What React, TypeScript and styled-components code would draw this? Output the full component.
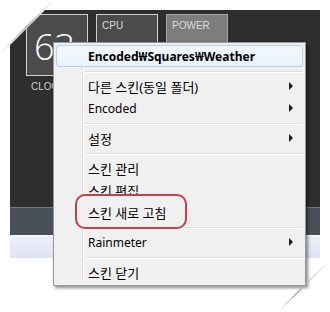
import styled, { createGlobalStyle } from 'styled-components';

const GlobalStyle = createGlobalStyle`
  html, body {
    margin: 0;
    padding: 0;
    background: #ffffff;
  }
  body {
    font-family: "Noto Sans", "Noto Sans CJK KR", sans-serif;
  }
`;

type MenuEntry =
  | { kind: 'item'; label: string; arrow?: boolean; active?: boolean; bold?: boolean; circled?: boolean }
  | { kind: 'sep' };

const entries: MenuEntry[] = [
  { kind: 'item', label: 'Encoded₩Squares₩Weather', active: true, bold: true },
  { kind: 'sep' },
  { kind: 'item', label: '다른 스킨(동일 폴더)', arrow: true },
  { kind: 'item', label: 'Encoded', arrow: true },
  { kind: 'sep' },
  { kind: 'item', label: '설정', arrow: true },
  { kind: 'sep' },
  { kind: 'item', label: '스킨 관리' },
  { kind: 'item', label: '스킨 편집' },
  { kind: 'item', label: '스킨 새로 고침', circled: true },
  { kind: 'sep' },
  { kind: 'item', label: 'Rainmeter', arrow: true },
  { kind: 'sep' },
  { kind: 'item', label: '스킨 닫기' },
];

const hasHangul = (s: string) => /[가-힣]/.test(s);

function PageCurls() {
  return (
    <Curls width="330" height="312" viewBox="0 0 330 312">
      <defs>
        <linearGradient id="curlA" x1="0" y1="1" x2="1" y2="0">
          <stop offset="0" stopColor="#c8c8c8" stopOpacity="0" />
          <stop offset="0.5" stopColor="#b8b8b8" />
          <stop offset="1" stopColor="#c8c8c8" stopOpacity="0" />
        </linearGradient>
        <linearGradient id="curlB" x1="0" y1="1" x2="1" y2="0">
          <stop offset="0" stopColor="#a8a8a8" stopOpacity="0" />
          <stop offset="0.35" stopColor="#a8a8a8" />
          <stop offset="1" stopColor="#d0d0d0" stopOpacity="0" />
        </linearGradient>
      </defs>
      <polygon points="10,10 45,10 10,45" fill="#ffffff" />
      <polygon points="0,52 52,0 55,0 0,55" fill="url(#curlA)" />
      <polygon points="279,310 330,259 330,261 281,310" fill="url(#curlB)" />
    </Curls>
  );
}

export default function App() {
  return (
    <Frame>
      <GlobalStyle />
      <Desktop>
        <DarkArea>
          <TileGroup>
            <Tile $tone="dark">
              <BigNumber>63</BigNumber>
            </Tile>
            <Caption>CLOCK</Caption>
          </TileGroup>
          <Tile $tone="dark">
            <TileLabel>CPU</TileLabel>
          </Tile>
          <Tile $tone="light">
            <TileLabel>POWER</TileLabel>
          </Tile>
        </DarkArea>
        <Taskbar />
        <Strip />
      </Desktop>

      <Menu>
        {entries.map((e, i) =>
          e.kind === 'sep' ? (
            <Separator key={i} />
          ) : (
            <Item key={i} $active={e.active} $circled={e.circled}>
              <Label $bold={e.bold} $hangul={hasHangul(e.label)}>
                {e.label}
              </Label>
              {e.arrow && <Arrow />}
            </Item>
          )
        )}
      </Menu>

      <PageCurls />
    </Frame>
  );
}

const Frame = styled.div`
  position: relative;
  width: 330px;
  height: 312px;
  padding: 10px;
  box-sizing: border-box;
  overflow: hidden;
  background: #ffffff;
`;

const Desktop = styled.div`
  display: flex;
  flex-direction: column;
  width: 310px;
`;

const DarkArea = styled.div`
  display: flex;
  align-items: flex-start;
  gap: 8px;
  height: 197px;
  box-sizing: border-box;
  padding: 4px 0 0 16px;
  background: #2e2e2e;
`;

const TileGroup = styled.div`
  display: flex;
  flex-direction: column;
`;

const Tile = styled.div<{ $tone: 'dark' | 'light' }>`
  position: relative;
  width: 62px;
  height: 62px;
  box-sizing: border-box;
  padding: 5px 4px;
  border: 1px solid ${(p) => (p.$tone === 'dark' ? '#cfcfcf' : '#a8a8a8')};
  background: ${(p) =>
    p.$tone === 'dark'
      ? 'repeating-conic-gradient(#525252 0 25%, #444444 0 50%) 0 0 / 2px 2px'
      : 'repeating-conic-gradient(#848484 0 25%, #767676 0 50%) 0 0 / 2px 2px'};
`;

const BigNumber = styled.div`
  padding: 9px 0 0 3px;
  font-family: "Open Sans", "Liberation Sans", sans-serif;
  font-weight: 300;
  font-size: 36px;
  line-height: 36px;
  color: #ffffff;
`;

const TileLabel = styled.div`
  font-family: "Liberation Sans", Arial, sans-serif;
  font-size: 10px;
  line-height: 12px;
  color: #dcdcdc;
  padding-left: 1px;
`;

const Caption = styled.div`
  margin-top: 5px;
  padding-left: 5px;
  font-family: "Liberation Sans", Arial, sans-serif;
  font-size: 10px;
  line-height: 12px;
  color: #d0d0d0;
`;

const Taskbar = styled.div`
  height: 28px;
  box-sizing: border-box;
  border-top: 1px solid #737980;
  background: #4a5058;
`;

const Strip = styled.div`
  height: 23px;
  box-sizing: border-box;
  border-top: 1px solid #ffffff;
  background: linear-gradient(#edeff9, #dfe2f2);
`;

const Menu = styled.div`
  position: absolute;
  left: 53px;
  top: 42px;
  width: 253px;
  box-sizing: border-box;
  padding: 2px;
  border: 1px solid #979797;
  background: #f0f0f0;
  box-shadow: 2px 2px 3px rgba(0, 0, 0, 0.45);
  font-family: "Noto Sans", "Noto Sans CJK KR", sans-serif;
  font-size: 12px;
  color: #000000;

  &::before {
    content: '';
    position: absolute;
    left: 28px;
    top: 2px;
    bottom: 2px;
    width: 1px;
    background: #e0e0e0;
    box-shadow: 1px 0 0 #ffffff;
  }
`;

const Item = styled.div<{ $active?: boolean; $circled?: boolean }>`
  position: relative;
  display: flex;
  align-items: center;
  height: 22px;
  box-sizing: border-box;
  padding: 0 9px 0 31px;
  border: 1px solid ${(p) => (p.$active ? '#b3d3ee' : 'transparent')};
  border-radius: 3px;
  background: ${(p) => (p.$active ? 'linear-gradient(#f3f7fb, #e9f1f9)' : 'transparent')};

  ${(p) =>
    p.$circled &&
    `
    &::before {
      content: '';
      position: absolute;
      left: 18px;
      top: -8px;
      width: 112px;
      height: 35px;
      box-sizing: border-box;
      border: 2px solid #c4404c;
      border-radius: 10px;
      background: #f0f0f0;
    }
  `}
`;

const Label = styled.span<{ $bold?: boolean; $hangul?: boolean }>`
  position: relative;
  font-size: ${(p) => (p.$hangul ? '13px' : '12px')};
  font-weight: ${(p) => (p.$bold ? 700 : 400)};
  white-space: nowrap;
`;

const Arrow = styled.span`
  margin-left: auto;
  width: 0;
  height: 0;
  border-left: 4px solid #1a1a1a;
  border-top: 4px solid transparent;
  border-bottom: 4px solid transparent;
`;

const Separator = styled.div`
  height: 8px;
  margin-left: 28px;
  display: flex;
  align-items: center;

  &::after {
    content: '';
    flex: 1;
    height: 1px;
    background: #e0e0e0;
    box-shadow: 0 1px 0 #ffffff;
  }
`;

const Curls = styled.svg`
  position: absolute;
  left: 0;
  top: 0;
  pointer-events: none;
`;
